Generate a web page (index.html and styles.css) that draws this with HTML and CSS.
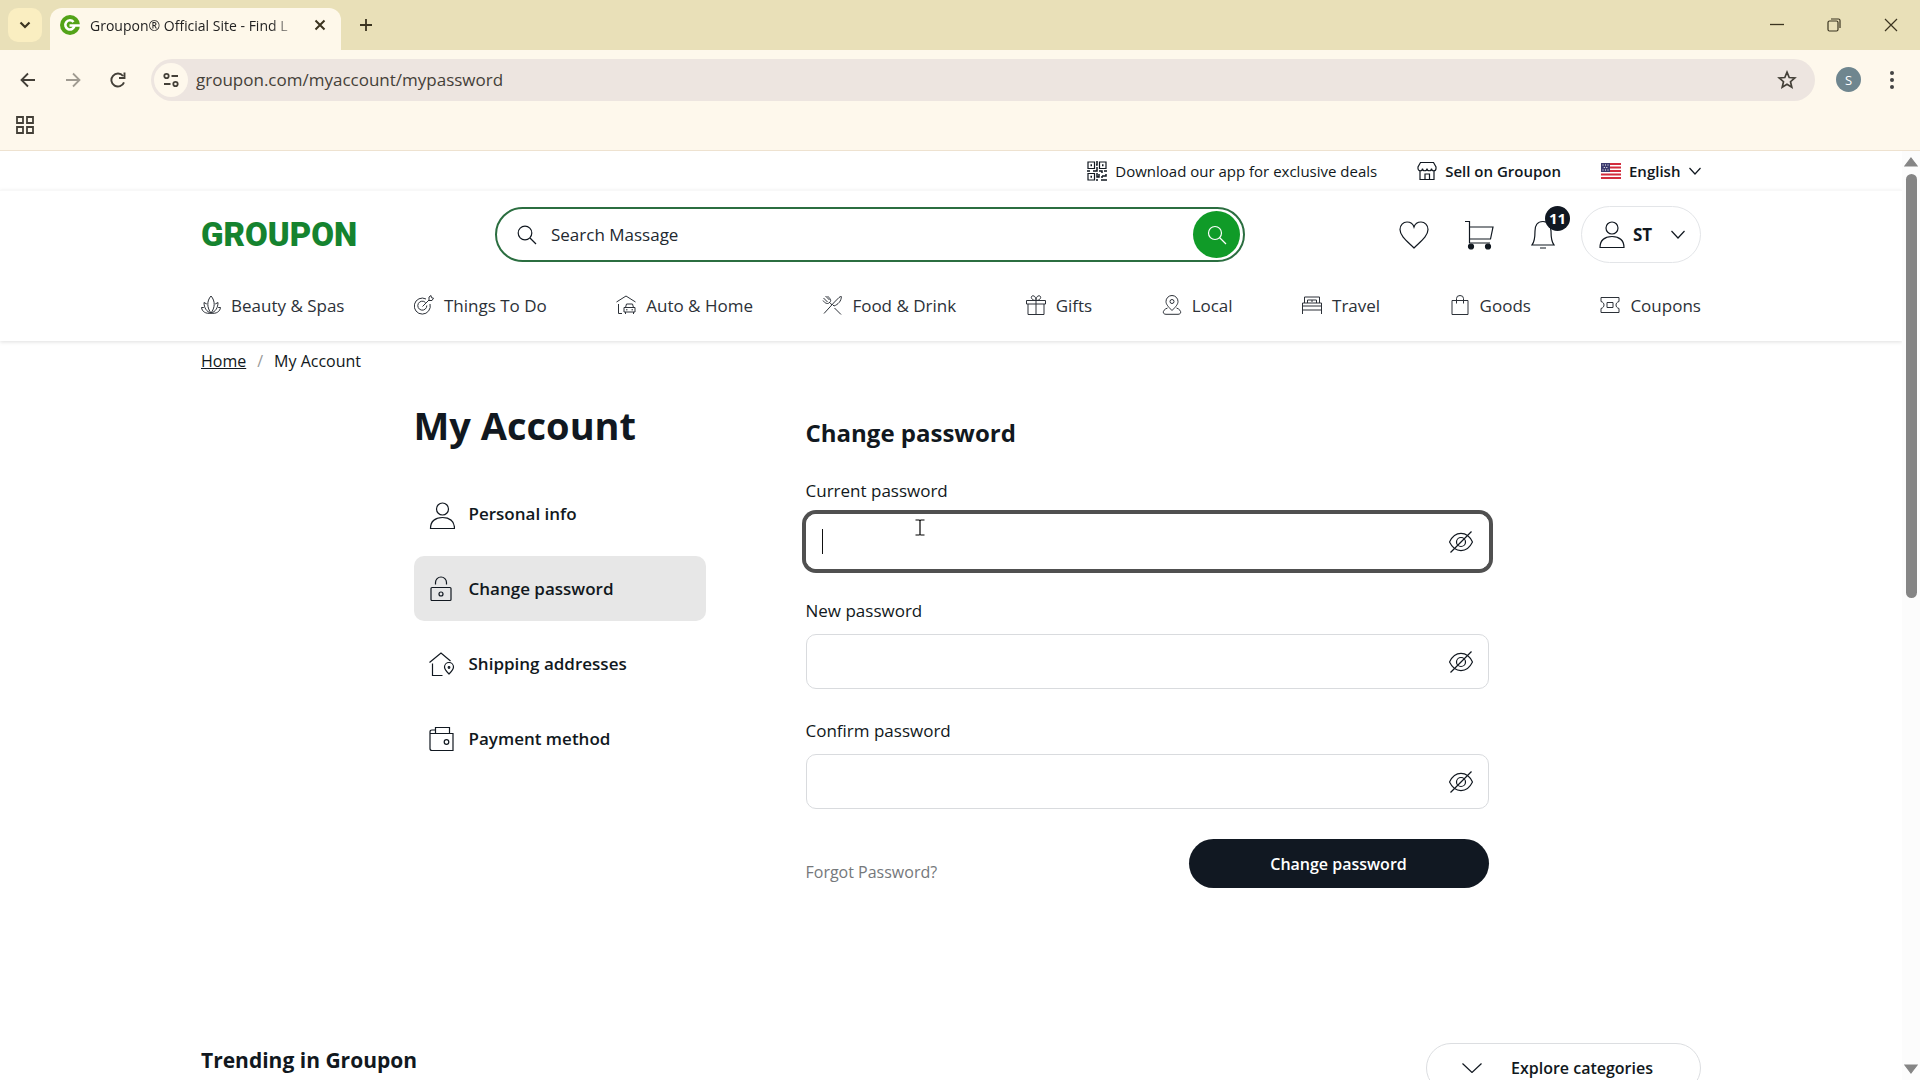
FILE: index.html
```html
<!DOCTYPE html>
<html lang="en">
<head>
  <meta charset="UTF-8">
  <meta name="viewport" content="width=device-width, initial-scale=1.0">
  <title>Groupon® Official Site - Find Local Deals</title>
  <link rel="stylesheet" href="styles.css">
</head>
<body>

  <!-- Browser -->
  <div class="tab-strip">
    <button class="tab-search" aria-label="Search tabs">
      <svg width="12" height="8" viewBox="0 0 12 8"><path d="M1.5 1.5 6 6l4.500-4.500" stroke-width="2.200"/></svg>
    </button>
    <div class="tab">
      <svg class="favicon" width="20" height="20" viewBox="0 0 20 20"><circle cx="10" cy="10" r="10" fill="#53a318" stroke="none"/><path d="M13.500 7A4.600 4.600 0 1 0 14.500 10.500H9.500M14 10.500h6" stroke="#fff" stroke-width="2.600"/></svg>
      <span class="tab-title">Groupon® Official Site - Find L</span>
      <button class="plain" aria-label="Close tab">
        <svg width="12" height="12" viewBox="0 0 12 12"><path d="M1.500 1.500l9 9M10.500 1.500l-9 9" stroke-width="2"/></svg>
      </button>
    </div>
    <button class="plain new-tab" aria-label="New tab">
      <svg width="14" height="14" viewBox="0 0 14 14"><path d="M7 1v12M1 7h12" stroke-width="1.800"/></svg>
    </button>
    <div class="window-buttons">
      <button class="plain" aria-label="Minimize"><svg width="14" height="14" viewBox="0 0 14 14"><path d="M0 6.500h14" stroke-width="1.300"/></svg></button>
      <button class="plain" aria-label="Restore"><svg width="14" height="14" viewBox="0 0 14 14"><rect x="1" y="3" width="10" height="10" rx="1.500"/><path d="M4 1h7.500Q13 1 13 2.500V10"/></svg></button>
      <button class="plain" aria-label="Close"><svg width="14" height="14" viewBox="0 0 14 14"><path d="M1 1l12 12M13 1 1 13"/></svg></button>
    </div>
  </div>

  <div class="toolbar">
    <button class="plain" aria-label="Back"><svg width="16" height="16" viewBox="0 0 16 16"><path d="M8 1.500 1.500 8 8 14.500M1.500 8H15" stroke-width="1.800"/></svg></button>
    <button class="plain disabled" aria-label="Forward"><svg width="16" height="16" viewBox="0 0 16 16"><path d="M8 1.500 14.500 8 8 14.500M14.500 8H1" stroke-width="1.800"/></svg></button>
    <button class="plain" aria-label="Reload"><svg width="16" height="16" viewBox="0 0 16 16"><path d="M14 10.300A6.500 6.500 0 1 1 13 4M14.500.5v5.500H9" stroke-width="1.900"/></svg></button>
    <div class="omnibox">
      <span class="site-info"><svg width="16" height="16" viewBox="0 0 16 16"><circle cx="3.500" cy="4" r="2.200"/><circle cx="12.500" cy="12" r="2.200"/><path d="M8.500 4H15M1 12h6.500"/></svg></span>
      <input class="url" type="text" aria-label="Address" value="groupon.com/myaccount/mypassword">
      <button class="plain" aria-label="Bookmark"><svg width="20" height="20" viewBox="0 0 20 20"><path d="M10 2.200l2.200 5.300 5.600.5-4.300 3.700 1.300 5.600-4.800-3-4.800 3 1.300-5.600L2.200 8l5.600-.5z" stroke-width="1.700"/></svg></button>
    </div>
    <button class="profile" aria-label="Profile">S</button>
    <button class="plain" aria-label="Menu"><svg width="4" height="18" viewBox="0 0 4 18"><g fill="#444" stroke="none"><circle cx="2" cy="2" r="2"/><circle cx="2" cy="9" r="2"/><circle cx="2" cy="16" r="2"/></g></svg></button>
  </div>

  <div class="bookmarks">
    <button class="plain" aria-label="Apps"><svg width="18" height="18" viewBox="0 0 18 18"><path d="M1 1h6v6H1zM11 1h6v6h-6zM1 11h6v6H1zM11 11h6v6h-6z" stroke-width="1.800"/></svg></button>
  </div>

  <!-- Page -->
  <div class="viewport">
    <div class="page">

      <div class="top-links wrap">
        <a href="#" class="app"><svg width="20" height="20" viewBox="0 0 20 20"><path d="M1 1h6.500v6.500H1zM12.500 1H19v6.500h-6.500zM1 12.500h6.500V19H1z"/><path d="M3.500 4.200H5M15 4.200h1.500M3.500 15.700H5" stroke-width="2"/><path d="M10 0v4h-1M10 6v4H6M0 10h3M12 10h3v2M17 10h3M10 12v4h2v-3M10 18v2M14 19h6M15 15h4v-2M15 15v2" stroke-width="1.500"/></svg>Download our app for exclusive deals</a>
        <a href="#" class="sell"><svg width="20" height="20" viewBox="0 0 20 20"><path d="M3.500 1.500h13L19 6v1.500a2.200 2.200 0 0 1-4.500 0 2.200 2.200 0 0 1-4.500 0 2.200 2.200 0 0 1-4.500 0A2.200 2.200 0 0 1 1 7.500V6zM3 10v8.500h14V10M8 18.500V13h4.500v5.500"/></svg>Sell on Groupon</a>
        <label class="language">
          <svg width="20" height="16" viewBox="0 0 20 16"><g stroke="none"><path fill="#fff" d="M0 0h20v16H0z"/><path fill="#d22c3d" d="M0 0h20v2H0zM0 3.500h20v2H0zM0 7h20v2H0zM0 10.500h20v2H0zM0 14h20v2H0z"/><path fill="#3c3b6e" d="M0 0h9v9H0z"/><path fill="#fff" d="M1.500 1.500h1v1h-1zM4 1.500h1v1H4zM6.500 1.500h1v1h-1zM2.800 4h1v1h-1zM5.300 4h1v1h-1zM1.500 6.500h1v1h-1zM4 6.500h1v1H4zM6.500 6.500h1v1h-1z"/></g></svg>
          <select aria-label="Language"><option>English</option></select>
          <svg width="12" height="8" viewBox="0 0 12 8"><path d="M.5 1 6 7l5.500-6"/></svg>
        </label>
      </div>

      <header class="header">
        <div class="header-row wrap">
          <a href="#" class="logo">GROUPON</a>
          <form class="search">
            <svg width="20" height="20" viewBox="0 0 20 20"><circle cx="8" cy="8" r="6.800"/><path d="M13 13l6 6"/></svg>
            <input type="text" aria-label="Search" placeholder="Search Massage">
            <button type="button" class="search-btn" aria-label="Search"><svg width="20" height="20" viewBox="0 0 20 20"><circle cx="8" cy="8" r="6.500"/><path d="M12.500 12.500l6.500 6.500"/></svg></button>
          </form>
          <div class="actions">
            <a href="#" aria-label="Wishlist"><svg width="30" height="28" viewBox="0 0 30 28"><path d="M15 27C9 21 1 15.500 1 8.500 1 4 4.200 1 8 1c3.500 0 6 2 7 5 1-3 3.500-5 7-5 3.800 0 7 3 7 7.500C29 15.500 21 21 15 27z"/></svg></a>
            <a href="#" aria-label="Cart"><svg width="30" height="30" viewBox="0 0 30 30"><path d="M0 1.500h4.500v21.500H25M4.500 7H28l-2.500 12h-21"/><g fill="#111820"><circle cx="6" cy="26.500" r="2.500"/><circle cx="23" cy="26.500" r="2.500"/></g></svg></a>
            <a href="#" class="bell" aria-label="Notifications"><svg width="24" height="30" viewBox="0 0 24 30"><path d="M12 1.500C6 1.500 4 6 4 11c0 7-.5 11-3 14h22c-2.500-3-3-7-3-14 0-5-2-9.500-8-9.500zM9 28h6"/></svg><span class="badge">11</span></a>
            <button class="account"><svg width="26" height="28" viewBox="0 0 26 28"><circle cx="13" cy="7" r="6"/><path d="M1 26.500C1 19 6 15.500 13 15.500S25 19 25 26.500z"/></svg>ST<svg class="caret-down" width="14" height="9" viewBox="0 0 14 9"><path d="M.5 1 7 8l6.500-7"/></svg></button>
          </div>
        </div>

        <nav class="nav wrap">
          <a href="#"><svg width="20" height="20" viewBox="0 0 20 20"><path d="M10 1C5.500 6 6 13 10 18c4-5 4.500-12 0-17zM5.800 9 3 7.500c0 5 2.500 9.500 7 10.500 4.500-1 7-5.500 7-10.500L14.200 9M2.800 12.500H.5c.5 4 4 6.500 9.500 5.700 5.500.8 9-1.700 9.500-5.700h-2.300"/></svg>Beauty &amp; Spas</a>
          <a href="#"><svg width="20" height="20" viewBox="0 0 20 20"><path d="M12 4A8 8 0 1 0 16 9M11.500 7.500a4.500 4.500 0 1 0 1.300 3M8.500 11.500 15 5V2l2-1.500.5 2.200 2 .5L18 5.500h-3"/></svg>Things To Do</a>
          <a href="#"><svg width="20" height="20" viewBox="0 0 20 20"><path d="M.5 7 10 1l9.500 6M2.500 9v9.500H6M8 12.500h11V17H8zM9.500 12.500l1-3.500h6l1 3.500M9.500 17v2M17.500 17v2M10 14.800h1.500M15.500 14.800H17"/></svg>Auto &amp; Home</a>
          <a href="#"><svg width="20" height="20" viewBox="0 0 20 20"><path d="M1 5.500C3 8.500 5.500 9 7 8L8.200 6.800M5.500 1C8 3.500 9.500 5 8.200 6.800M1.500 3l4 4M3.500 1l4 4M7.800 7.500l2.200 2.500M12.500 13l6.500 6.500M2 18.500 12.500 7 17 2.500Q19 1 19.300 1.500C19.500 6 16 9.500 12 11l-1.500-1.500"/></svg>Food &amp; Drink</a>
          <a href="#"><svg width="20" height="20" viewBox="0 0 20 20"><path d="M.5 5.500h19V9H.5zM2 9v10.500h16V9M10 5.500v14M10 5.500C5 5.500 4 .8 7 .8s3 4.700 3 4.700S10 .8 13 .8s2 4.700-3 4.700z"/></svg>Gifts</a>
          <a href="#"><svg width="20" height="20" viewBox="0 0 20 20"><path d="M10 15.500C5.500 11 4 9 4 6.500a6 6 0 0 1 12 0c0 2.500-1.500 4.500-6 9z"/><circle cx="10" cy="6.500" r="2"/><path d="M5.500 13C1 14.500-.5 19 4 19.300h12c4.500-.3 3-4.800-1.500-6.300"/></svg>Local</a>
          <a href="#"><svg width="20" height="20" viewBox="0 0 20 20"><path d="M2.500 8V2h15v6M5.500 8V5h9v3M10 5v2M.5 8h19v3H.5zM.5 11v8M19.500 11v8M.5 15h19"/></svg>Travel</a>
          <a href="#"><svg width="20" height="20" viewBox="0 0 20 20"><path d="M2 5.500h16v14H2zM6.500 8.500v-5a3.500 3 0 0 1 7 0v5"/></svg>Goods</a>
          <a href="#"><svg width="20" height="20" viewBox="0 0 20 20"><path d="M1 2.500h18v4c-4 1-4 6 0 7v4H1v-4c4-1 4-6 0-7zM7 7.500h6v5H7z"/></svg>Coupons</a>
        </nav>
      </header>

      <div class="breadcrumb wrap"><a href="#">Home</a><span class="slash">/</span><span>My Account</span></div>

      <main class="content">
        <aside class="sidebar">
          <h1>My Account</h1>
          <a href="#"><svg width="26" height="32" viewBox="-1 -4 26 32"><circle cx="12.500" cy="7" r="6"/><path d="M.5 26.500C.5 19 5.500 15.500 12.500 15.500S24.500 19 24.500 26.500z"/></svg>Personal info</a>
          <a href="#" class="active"><svg width="26" height="26" viewBox="0 0 26 26"><rect x="2" y="11.500" width="20" height="13" rx="1"/><path d="M6.500 8.500V6.500a5.500 5.500 0 0 1 11 0v2"/><circle cx="12" cy="18" r="2"/></svg>Change password</a>
          <a href="#"><svg width="26" height="26" viewBox="0 0 26 26"><path d="M.5 11.500 12 2l9.500 8M3.500 12.500v12h10M20 23c-3-3-4.500-4.500-4.500-7a4.500 4.500 0 0 1 9 0c0 2.500-1.500 4-4.500 7z"/><circle cx="20" cy="16.500" r=".8"/></svg>Shipping addresses</a>
          <a href="#"><svg width="26" height="26" viewBox="0 0 26 26"><path d="M6.500 7.500V1.500h14v6M6.500 4H3Q1 4 1 6v16.500Q1 24.500 3 24.500h21V7.500H1"/><circle cx="17.500" cy="16" r="2.300"/></svg>Payment method</a>
        </aside>

        <form class="password-form">
          <h2>Change password</h2>

          <label for="current">Current password</label>
          <div class="field focused">
            <input type="password" id="current">
            <span class="caret"></span>
            <svg class="ibeam" width="10" height="17" viewBox="0 0 10 17"><path d="M.5 1H4l1 .5L6 1h3.500M5 1v15M.5 16H4l1-.5 1 .5h3.500" stroke="#000"/></svg>
            <button type="button" class="plain" aria-label="Show current password"><svg width="24" height="22" viewBox="0 0 24 22"><path d="M.5 11C6-.5 18-.5 23.500 11 18 22.500 6 22.500.5 11zM1.500 21.500 22.500.5"/><circle cx="12" cy="11" r="4.500"/></svg></button>
          </div>

          <label for="new">New password</label>
          <div class="field">
            <input type="password" id="new">
            <button type="button" class="plain" aria-label="Show new password"><svg width="24" height="22" viewBox="0 0 24 22"><path d="M.5 11C6-.5 18-.5 23.500 11 18 22.500 6 22.500.5 11zM1.500 21.500 22.500.5"/><circle cx="12" cy="11" r="4.500"/></svg></button>
          </div>

          <label for="confirm">Confirm password</label>
          <div class="field">
            <input type="password" id="confirm">
            <button type="button" class="plain" aria-label="Show confirmed password"><svg width="24" height="22" viewBox="0 0 24 22"><path d="M.5 11C6-.5 18-.5 23.500 11 18 22.500 6 22.500.5 11zM1.500 21.500 22.500.5"/><circle cx="12" cy="11" r="4.500"/></svg></button>
          </div>

          <div class="form-footer">
            <a href="#">Forgot Password?</a>
            <button type="button" class="submit">Change password</button>
          </div>
        </form>
      </main>

      <section class="trending wrap">
        <h2>Trending in Groupon</h2>
        <button class="explore"><svg width="20" height="10" viewBox="0 0 20 10"><path d="M.5.5 10 9.500l9.500-9"/></svg>Explore categories</button>
      </section>
    </div>

    <div class="scrollbar">
      <svg width="14" height="10" viewBox="0 0 14 10"><path d="M7 1l6 8H1z" fill="#858585" stroke="#858585"/></svg>
      <div class="track"><div class="thumb"></div></div>
      <svg width="14" height="10" viewBox="0 0 14 10"><path d="M7 9l6-8H1z" fill="#858585" stroke="#858585"/></svg>
    </div>
  </div>

</body>
</html>
```

FILE: styles.css
```css
* {
  box-sizing: border-box;
}

body {
  margin: 0;
  height: 100vh;
  display: flex;
  flex-direction: column;
  overflow: hidden;
  font-family: "Open Sans", "Noto Sans", sans-serif;
  font-size: 16px;
  color: #111820;
  background: #fff;
}

svg {
  display: block;
  flex: none;
  fill: none;
  stroke: currentColor;
  stroke-width: 1.2;
}

a {
  color: inherit;
  text-decoration: none;
}

button, input, select {
  font: inherit;
  color: inherit;
}

input {
  min-width: 0;
  border: none;
  outline: none;
  background: transparent;
}

button {
  border: none;
  cursor: pointer;
}

.plain {
  padding: 0;
  background: none;
}

h1, h2 {
  margin: 0;
}

/* browser */
.tab-strip {
  display: flex;
  align-items: center;
  height: 50px;
  padding: 0 12px 0 8px;
  background: #e9e0b8;
  color: #3b3420;
}

.tab-search {
  display: flex;
  align-items: center;
  justify-content: center;
  width: 34px;
  height: 34px;
  border-radius: 10px;
  background: #faeec1;
}

.tab {
  display: flex;
  align-items: center;
  align-self: flex-end;
  width: 291px;
  height: 42px;
  margin-left: 8px;
  padding: 0 15px 8px 10px;
  border-radius: 12px 12px 0 0;
  background: #fef8ea;
}

.tab-title {
  flex: 1;
  margin: 0 14px 0 10px;
  white-space: nowrap;
  font-size: 14px;
  color: #222;
  mask-image: linear-gradient(to right, #000 86%, transparent);
}

.new-tab {
  margin-left: 18px;
}

.window-buttons {
  display: flex;
  gap: 43px;
  margin-left: auto;
  padding-right: 10px;
}

.toolbar {
  display: flex;
  align-items: center;
  gap: 29px;
  height: 59px;
  padding: 0 26px 0 20px;
  background: #fef8ec;
  color: #444038;
}

.disabled {
  opacity: 0.5;
}

.omnibox {
  flex: 1;
  display: flex;
  align-items: center;
  height: 42px;
  margin-left: -4px;
  margin-right: -8px;
  padding: 0 18px 0 3px;
  border-radius: 21px;
  background: #ede5e0;
}

.site-info {
  display: flex;
  align-items: center;
  justify-content: center;
  width: 34px;
  height: 34px;
  border-radius: 50%;
  background: #fef8ec;
}

.site-info svg {
  stroke-width: 1.8;
}

.url {
  flex: 1;
  padding: 0 0 0 8px;
  font-size: 17px;
}

.profile {
  width: 25px;
  height: 25px;
  padding: 0;
  border-radius: 50%;
  background: #6f868f;
  color: #fff;
  font-size: 13px;
}

.bookmarks {
  height: 42px;
  padding: 7px 16px;
  background: #fef8ec;
  border-bottom: 1px solid #eee2d0;
  color: #444038;
}

/* page */
.viewport {
  flex: 1;
  min-height: 0;
  display: flex;
}

.page {
  flex: 1;
  overflow: hidden;
}

.wrap {
  width: 79%;
  max-width: 1500px;
  margin: 0 auto;
}

.top-links {
  display: flex;
  align-items: center;
  justify-content: flex-end;
  height: 39px;
  font-size: 15px;
  font-weight: 600;
}

.top-links a,
.language {
  display: flex;
  align-items: center;
  gap: 8px;
}

.top-links .app {
  font-weight: 500;
}

.top-links .sell {
  margin: 0 40px;
}

.language select {
  appearance: none;
  padding: 0;
  border: none;
  outline: none;
  background: none;
}

.header {
  height: 151px;
  border-top: 1px solid #f8f8f8;
  box-shadow: 0 1px 4px rgba(0, 0, 0, 0.13);
}

.header-row {
  display: flex;
  align-items: center;
  height: 87px;
}

.logo {
  width: 294px;
  font-family: Roboto, sans-serif;
  font-size: 33px;
  font-weight: 900;
  line-height: 40px;
  color: #15832f;
}

.search {
  display: flex;
  align-items: center;
  width: 50%;
  height: 55px;
  padding: 0 3px 0 20px;
  border: 2px solid #2b6e40;
  border-radius: 28px;
}

.search input {
  flex: 1;
  padding: 0 14px;
  font-size: 17px;
}

.search input::placeholder {
  color: #222830;
  opacity: 1;
}

.search-btn {
  display: flex;
  align-items: center;
  justify-content: center;
  width: 47px;
  height: 47px;
  padding: 0;
  border-radius: 50%;
  background: #109b28;
  color: #fff;
}

.actions {
  display: flex;
  align-items: center;
  margin-left: auto;
}

.actions a {
  margin-right: 36px;
}

.actions .bell {
  position: relative;
  margin-right: 26px;
}

.badge {
  position: absolute;
  top: -14px;
  right: -15px;
  width: 25px;
  height: 25px;
  border-radius: 50%;
  background: #111822;
  color: #fff;
  font-size: 15px;
  font-weight: 700;
  line-height: 25px;
  text-align: center;
}

.account {
  display: flex;
  align-items: center;
  gap: 8px;
  width: 120px;
  height: 57px;
  padding: 0 15px 0 17px;
  border: 1px solid #e3e5e8;
  border-radius: 29px;
  background: none;
  font-size: 17px;
  font-weight: 700;
}

.caret-down {
  margin-left: auto;
}

.nav {
  display: flex;
  align-items: center;
  justify-content: space-between;
  height: 54px;
  font-size: 17px;
  color: #2c3138;
}

.nav a {
  display: flex;
  align-items: center;
  gap: 10px;
}

.nav svg {
  stroke-width: 1;
}

.breadcrumb {
  display: flex;
  align-items: center;
  gap: 11px;
  height: 40px;
  font-size: 16px;
}

.breadcrumb a {
  text-decoration: underline;
}

.slash {
  color: #999;
}

.content {
  display: flex;
  justify-content: space-between;
  width: 1075px;
  margin: 0 auto;
}

.sidebar {
  width: 292px;
}

.sidebar h1 {
  height: 100px;
  padding-top: 19px;
  font-size: 38px;
  font-weight: 700;
  line-height: 50px;
}

.sidebar a {
  display: flex;
  align-items: center;
  gap: 14px;
  height: 65px;
  margin-bottom: 10px;
  padding-left: 15px;
  border-radius: 10px;
  font-size: 17px;
  font-weight: 600;
}

.sidebar .active {
  background: #e7e7e7;
}

.password-form {
  width: 683px;
}

.password-form h2 {
  padding: 36px 0 29px;
  font-size: 24px;
  font-weight: 700;
  line-height: 32px;
}

.password-form label {
  display: block;
  height: 36px;
  font-size: 17px;
  line-height: 26px;
}

.field {
  position: relative;
  display: flex;
  align-items: center;
  height: 55px;
  margin-bottom: 29px;
  padding-right: 15px;
  border: 1px solid #d9dbde;
  border-radius: 10px;
}

.field input {
  flex: 1;
  height: 100%;
  padding: 0 15px;
}

.focused {
  border-color: #fff;
  box-shadow: 0 0 0 4px #505050;
}

.caret {
  position: absolute;
  left: 15px;
  top: 14px;
  width: 1px;
  height: 25px;
  background: #111;
}

.ibeam {
  position: absolute;
  left: 108px;
  top: 4px;
}

.form-footer {
  display: flex;
  align-items: center;
  justify-content: space-between;
  padding-top: 1px;
}

.form-footer a {
  padding-top: 16px;
  font-size: 16px;
  color: #75787b;
}

.submit {
  width: 300px;
  height: 49px;
  border-radius: 25px;
  background: #111822;
  color: #fff;
  font-size: 16px;
  font-weight: 600;
}

.trending {
  display: flex;
  justify-content: space-between;
  padding-top: 155px;
}

.trending h2 {
  font-size: 21px;
  font-weight: 700;
  line-height: 34px;
}

.explore {
  display: flex;
  align-items: center;
  gap: 29px;
  width: 275px;
  height: 50px;
  padding: 0 35px;
  border: 1px solid #dcdee1;
  border-radius: 25px;
  background: none;
  font-size: 16px;
  font-weight: 600;
}

.scrollbar {
  display: flex;
  flex-direction: column;
  align-items: center;
  width: 18px;
  padding: 6px 0;
  background: #fcfcfc;
}

.track {
  flex: 1;
  padding: 7px 0;
}

.thumb {
  width: 11px;
  height: 48%;
  border-radius: 6px;
  background: #858585;
}
```
